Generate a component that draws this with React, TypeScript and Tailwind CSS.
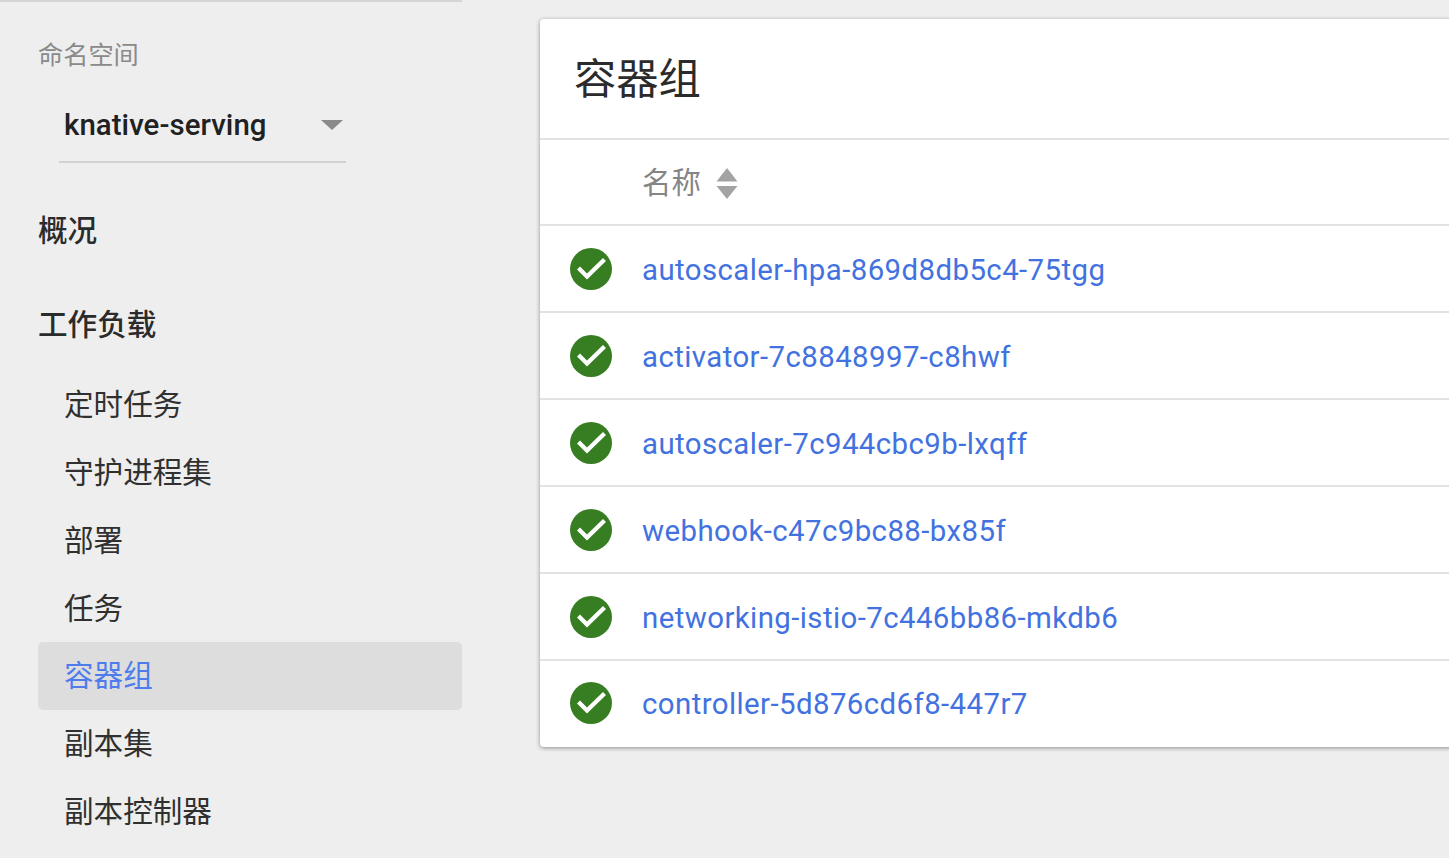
const fontStack = "font-['Roboto','Noto_Sans_CJK_SC',sans-serif]";

const workloads = ["定时任务", "守护进程集", "部署", "任务", "容器组", "副本集", "副本控制器"];

const pods = [
  "autoscaler-hpa-869d8db5c4-75tgg",
  "activator-7c8848997-c8hwf",
  "autoscaler-7c944cbc9b-lxqff",
  "webhook-c47c9bc88-bx85f",
  "networking-istio-7c446bb86-mkdb6",
  "controller-5d876cd6f8-447r7",
];

function StatusIcon() {
  return (
    <svg width="42" height="42" viewBox="0 0 42 42" className="shrink-0">
      <circle cx="21" cy="21" r="21" fill="#377e22" />
      <path d="M7 21.5L17 31.5L36 13L33 10L17 25.5L10 18.5z" fill="#ffffff" />
    </svg>
  );
}

function SortIcon() {
  return (
    <svg width="22" height="32" viewBox="0 0 22 32" className="shrink-0">
      <path d="M11 0l10.5 13.5h-21z" fill="#a3a3a3" />
      <path d="M11 31L0.5 18h21z" fill="#a3a3a3" />
    </svg>
  );
}

function Sidebar() {
  return (
    <div className="w-[462px] shrink-0 flex flex-col">
      <div className="h-[2px] bg-[#d5d5d5]" />
      <div className="pl-[38px] pt-[37px] h-[34px] box-content text-[25.2px] leading-[34px] text-[#8a8a8a]">命名空间</div>
      <div className="ml-[59px] w-[287px] h-[73px] mt-[17px] pl-[5px] pr-[3px] pb-[2px] border-b-2 border-[#d2d2d2] flex items-center justify-between">
        <span className="text-[29.4px] tracking-[0.07px] font-medium text-[#212121] leading-[36px]">knative-serving</span>
        <span className="w-0 h-0 border-x-[11px] border-x-transparent border-t-[10px] border-t-[#8a8a8a]" />
      </div>
      <div className="pl-[38px] mt-[48px] text-[29.6px] leading-[40px] font-medium text-[#2b2b2b]">概况</div>
      <div className="pl-[38px] mt-[54px] text-[29.6px] leading-[40px] font-medium text-[#2b2b2b]">工作负载</div>
      <div className="ml-[38px] mt-[26px] flex flex-col">
        {workloads.map((item) => (
          <div
            key={item}
            className={
              item === "容器组"
                ? "h-[67.8px] pl-[26px] pt-[1px] flex items-center rounded-[5px] bg-[#dddddd] text-[#4f7cec] text-[29.6px]"
                : "h-[67.8px] pl-[26px] pt-[1px] flex items-center text-[#303030] text-[29.6px]"
            }
          >
            {item}
          </div>
        ))}
      </div>
    </div>
  );
}

function PodCard() {
  return (
    <div className="ml-[78px] mt-[19px] w-[1000px] h-[728px] shrink-0 bg-white rounded-l-[4px] shadow-[0_1px_4px_rgba(0,0,0,0.4)] flex flex-col">
      <div className="h-[121px] shrink-0 pl-[34px] pt-[2px] flex items-center border-b-2 border-[#e2e2e2] text-[42.3px] text-[#2b2b2b]">
        容器组
      </div>
      <div className="h-[86px] shrink-0 pl-[102px] pt-[3px] flex items-center gap-[15px] border-b-2 border-[#e2e2e2] text-[29.4px] text-[#858585]">
        名称
        <SortIcon />
      </div>
      {pods.map((pod, i) => (
        <div
          key={pod}
          className={
            i < pods.length - 1
              ? "h-[87px] shrink-0 pl-[30px] flex items-center gap-[30px] border-b-2 border-[#e2e2e2]"
              : "h-[86px] shrink-0 pl-[30px] pb-[2px] flex items-center gap-[30px]"
          }
        >
          <StatusIcon />
          <span className="pt-[3px] text-[29.4px] tracking-[0.42px] text-[#4272e0]">{pod}</span>
        </div>
      ))}
    </div>
  );
}

export default function App() {
  return (
    <div className={`${fontStack} h-[858px] w-full overflow-hidden bg-[#eeeeee] flex`}>
      <Sidebar />
      <PodCard />
    </div>
  );
}
